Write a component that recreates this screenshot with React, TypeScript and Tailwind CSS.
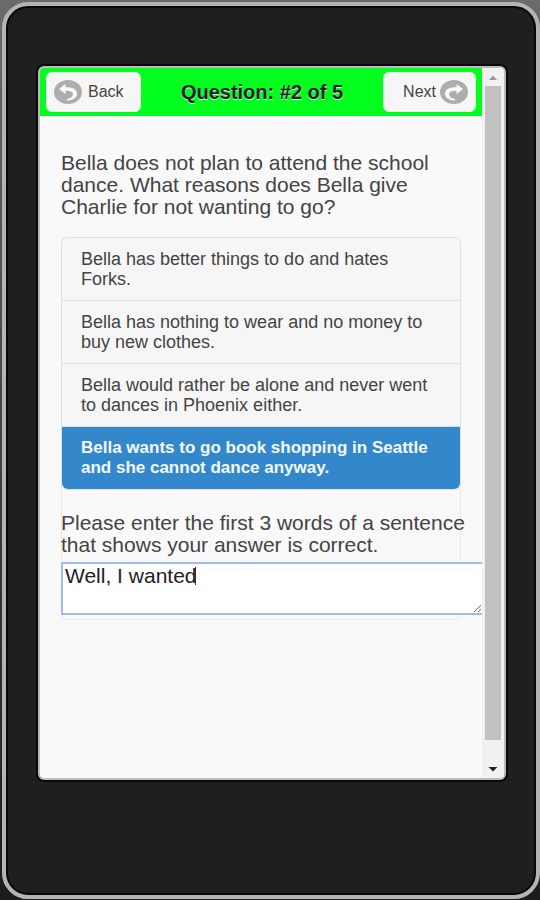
import { useState } from 'react';

// Answer choices for the current question
const answers = [
  'Bella has better things to do and hates Forks.',
  'Bella has nothing to wear and no money to buy new clothes.',
  'Bella would rather be alone and never went to dances in Phoenix either.',
  'Bella wants to go book shopping in Seattle and she cannot dance anyway.',
];

const ArrowIcon = ({ className = '' }: { className?: string }) => (
  <svg
    viewBox="0 0 28 24"
    className={`h-6 w-7 shrink-0 ${className}`}
    aria-hidden="true"
  >
    <ellipse cx="14" cy="12" rx="14" ry="12" fill="#adadad" />
    <path
      d="M5 9 11.500 4v3.200c6.500-.3 11.500 1.800 11.500 6.500 0 4-4 6.400-9.500 6.800-1-.1-1-1.100-.2-1.400 3.200-1.100 5.700-2.600 5.700-4.900 0-2.400-3-3.500-7.500-3.400V14z"
      fill="#fafafa"
    />
  </svg>
);

const Header = () => (
  <header className="flex h-12 items-center justify-between bg-[#00ff1e] px-1.5">
    <button
      type="button"
      className="flex h-10 w-[95px] items-center gap-1.5 rounded-md border border-[#e4f5e4] bg-[#f6f6f6] pl-[7px] text-base text-[#444]"
    >
      <ArrowIcon />
      Back
    </button>
    <h1 className="text-xl font-bold text-[#222] [text-shadow:0_1px_0_#e8e8e8]">
      Question: #2 of 5
    </h1>
    <button
      type="button"
      className="flex h-10 w-[93px] items-center justify-end gap-1 rounded-md border border-[#e4f5e4] bg-[#f6f6f6] pr-[7px] text-base text-[#444]"
    >
      Next
      <ArrowIcon className="-scale-x-100" />
    </button>
  </header>
);

const Scrollbar = () => (
  <div
    className="flex w-[22px] shrink-0 flex-col items-center bg-[#f1f1f1]"
    aria-hidden="true"
  >
    <svg viewBox="0 0 10 18" className="h-[18px] w-2.5">
      <path d="M1 12 5 7.500 9 12z" fill="#999" />
    </svg>
    <div className="w-4 flex-1 bg-[#c1c1c1]" />
    <svg viewBox="0 0 10 38" className="h-[38px] w-2.5">
      <path d="M0.500 27h9L5 31.500z" fill="#222" />
    </svg>
  </div>
);

export default function App() {
  const [selected, setSelected] = useState(3);
  const [evidence, setEvidence] = useState('Well, I wanted');

  return (
    <div className="flex min-h-screen bg-linear-to-b from-[#6a6a6a] to-[#1c1c1c] pt-0.5 pb-px pl-0.5 font-['Liberation_Sans',Arial,sans-serif]">
      <div className="flex min-w-0 flex-1 flex-col rounded-[26px] border-4 border-[#b4b4b4] bg-[#1f1f1f] pt-15 pr-[30px] pb-[115px] pl-8 shadow-[inset_0_0_0_2px_#080808]">
        <div className="flex flex-1 overflow-hidden rounded-md border-2 border-[#bdbaba] bg-[#f9f9f9] shadow-[0_0_0_2px_#080808]">
          <div className="min-w-0 flex-1 overflow-hidden">
            <Header />
            <main className="px-[21px] pt-9 pb-8 text-[21px] leading-[22px] text-[#444]">
              <p>
                Bella does not plan to attend the school dance. What reasons
                does Bella give Charlie for not wanting to go?
              </p>
              <div className="mt-[19px] rounded-md border border-[#e8e8e8] pb-1">
                <fieldset
                  aria-label="Answer"
                  className="-m-px overflow-hidden rounded-md border border-[#e0e0e0]"
                >
                  {answers.map((answer, index) => (
                    <label
                      key={answer}
                      className={
                        index === selected
                          ? 'relative -mx-px -mb-px block bg-[#3388cc] px-5 pt-[11px] pb-3 text-[17px] leading-5 font-bold text-[#f4f8ff]'
                          : 'relative block border-b border-[#e0e0e0] bg-[#f6f6f6] px-[19px] py-[11px] text-lg leading-5'
                      }
                    >
                      <input
                        type="radio"
                        name="answer"
                        className="sr-only"
                        checked={index === selected}
                        onChange={() => setSelected(index)}
                      />
                      {answer}
                    </label>
                  ))}
                </fieldset>
                <label
                  htmlFor="evidence"
                  className="-mr-2 -ml-px mt-[23px] block"
                >
                  Please enter the first 3 words of a sentence that shows your
                  answer is correct.
                </label>
                <div className="relative -mr-6 -ml-px mt-1.5">
                  <textarea
                    id="evidence"
                    value={evidence}
                    onChange={(event) => setEvidence(event.target.value)}
                    className="block h-[53px] w-full border-2 border-[#a3bcec] bg-white px-0.5 py-px text-[#222] outline-none"
                  />
                  <span className="absolute top-[5px] left-[134px] h-[18px] w-px bg-[#333]" />
                </div>
              </div>
            </main>
          </div>
          <Scrollbar />
        </div>
      </div>
    </div>
  );
}
